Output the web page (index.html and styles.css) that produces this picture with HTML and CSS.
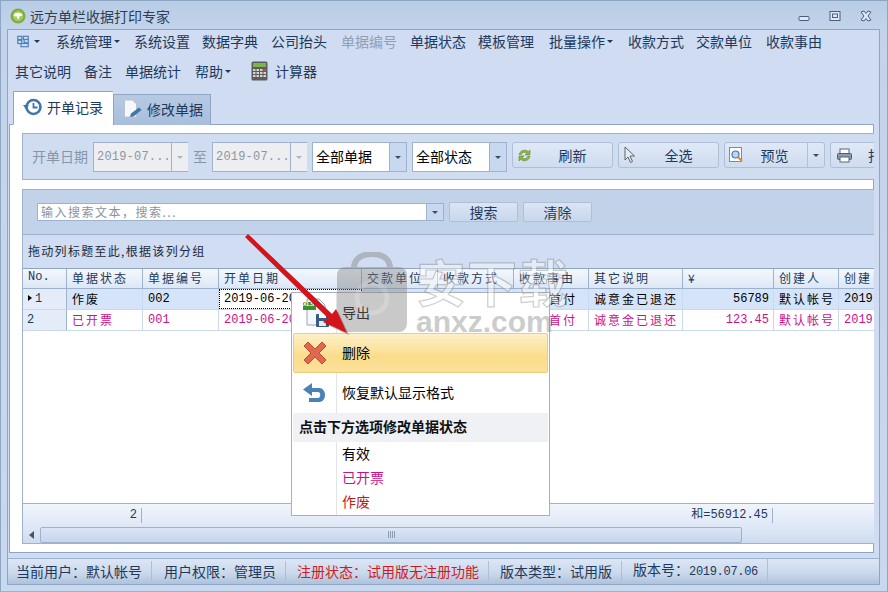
FILE: index.html
```html
<!DOCTYPE html>
<html lang="zh">
<head>
<meta charset="utf-8">
<title>远方单栏收据打印专家</title>
<link rel="stylesheet" href="styles.css">
</head>
<body>
<div class="app">
  <header class="titlebar">
    <svg class="appicon" width="16" height="16" viewBox="0 0 16 16"><circle cx="8" cy="8" r="7.5" fill="#7fae3c"/><circle cx="8" cy="8" r="5.2" fill="#a5cc63"/><path d="M3.5 7.5c1-2.5 4-3 6-2.5 1.500.3 2.800 1 3 2.200-.8.8-2 .8-3 .8l-.5 3H7.500L7 8.500c-1.200.3-2.500 0-3.500-1z" fill="#fff"/></svg>
    <span class="apptitle">远方单栏收据打印专家</span>
    <div class="winbtns">
      <svg width="12" height="12" viewBox="0 0 12 12"><rect x="1" y="6.500" width="10" height="4" rx="1" fill="#dfe8f4" stroke="#4a5f7c"/></svg>
      <svg width="12" height="12" viewBox="0 0 12 12"><rect x="1" y="1.500" width="10" height="9" fill="#dfe8f4" stroke="#4a5f7c"/><rect x="3.500" y="4" width="5" height="3.500" fill="none" stroke="#4a5f7c"/></svg>
      <svg width="12" height="12" viewBox="0 0 12 12"><path d="M1 2l3-1 2 2.500L8 1l3 1-3 4 3 4-3 1-2-2.500L4 11l-3-1 3-4z" fill="#dfe8f4" stroke="#4a5f7c"/></svg>
    </div>
  </header>

  <div class="frame">
    <nav class="menubar">
      <div class="menurow first">
        <span class="mitem iconitem">
          <svg width="15" height="15" viewBox="0 0 15 15"><g fill="#cfe0f4" stroke="#4f81bd" stroke-width="1.500"><rect x="1" y="1" width="5" height="4"/><rect x="8" y="1" width="6" height="4"/><rect x="9" y="5" width="5" height="4"/><rect x="1" y="6" width="5" height="4"/><rect x="5" y="10" width="9" height="4"/></g></svg>
          <i class="caret"></i>
        </span>
        <span class="mitem gap16">系统管理<i class="caret"></i></span>
        <span class="mitem gap14">系统设置</span>
        <span class="mitem gap12">数据字典</span>
        <span class="mitem gap13">公司抬头</span>
        <span class="mitem gap14 disabled">单据编号</span>
        <span class="mitem gap13">单据状态</span>
        <span class="mitem gap12">模板管理</span>
        <span class="mitem gap15">批量操作<i class="caret"></i></span>
        <span class="mitem gap15">收款方式</span>
        <span class="mitem gap12">交款单位</span>
        <span class="mitem gap14">收款事由</span>
      </div>
      <div class="menurow">
        <span class="mitem">其它说明</span>
        <span class="mitem gap13">备注</span>
        <span class="mitem gap13">单据统计</span>
        <span class="mitem gap14">帮助<i class="caret"></i></span>
        <span class="mitem gap18 calc">
          <svg width="17" height="20" viewBox="0 0 17 20"><rect x=".5" y=".5" width="16" height="19" rx="1.500" fill="#5c5c5c"/><rect x="2" y="2" width="13" height="4" fill="#7fb24a"/><g fill="#d9d4cc"><rect x="2" y="8" width="2.500" height="2"/><rect x="5.500" y="8" width="2.500" height="2"/><rect x="9" y="8" width="2.500" height="2"/><rect x="12.500" y="8" width="2.500" height="2" fill="#c25050"/><rect x="2" y="11" width="2.500" height="2"/><rect x="5.500" y="11" width="2.500" height="2"/><rect x="9" y="11" width="2.500" height="2"/><rect x="12.500" y="11" width="2.500" height="2"/><rect x="2" y="14" width="2.500" height="2"/><rect x="5.500" y="14" width="2.500" height="2"/><rect x="9" y="14" width="2.500" height="2"/><rect x="12.500" y="14" width="2.500" height="2"/></g></svg>
          计算器
        </span>
      </div>
    </nav>

    <div class="tabs">
      <div class="tab active">
        <svg width="20" height="20" viewBox="0 0 20 20"><circle cx="10.500" cy="10" r="7" fill="#fff" stroke="#3f77ad" stroke-width="2.600"/><path d="M10.500 6v4.500h4" fill="none" stroke="#3f77ad" stroke-width="1.800"/><path d="M0 8l6 0-3 4.500z" fill="#3f77ad"/></svg>
        开单记录
      </div>
      <div class="tab">
        <svg width="20" height="20" viewBox="0 0 20 20"><path d="M1.500 1h8l4 4v13h-12z" fill="#f7f8fa" stroke="#b9c3cf"/><path d="M7 18l1-3.500 8-6 2.500 2.500-8 6.500z" fill="#3f77ad"/></svg>
        修改单据
      </div>
    </div>

    <main class="page">
      <section class="toolbar">
        <span class="flabel">开单日期</span>
        <div class="combo date"><span>2019-07...</span><b class="arrowbtn"><i class="caret"></i></b></div>
        <span class="flabel to">至</span>
        <div class="combo date"><span>2019-07...</span><b class="arrowbtn"><i class="caret"></i></b></div>
        <div class="combo sel"><span>全部单据</span><b class="arrowbtn"><i class="caret dark"></i></b></div>
        <div class="combo sel"><span>全部状态</span><b class="arrowbtn"><i class="caret dark"></i></b></div>
        <button class="tbtn plain">
          <svg width="15" height="15" viewBox="0 0 15 15"><path d="M2 6.500C2.800 3.500 5.500 2 8 2.200c1.500.1 2.500.8 3.300 1.500L13 2v5H8l2-1.800C8.500 3.800 5 4 4.300 6.500z" fill="#8bb84a" stroke="#5e8a2a" stroke-width=".6"/><path d="M13 8.500c-.8 3-3.500 4.500-6 4.300-1.500-.1-2.500-.8-3.300-1.500L2 13V8h5l-2 1.800c1.500 1.400 5 1.200 5.700-1.300z" fill="#8bb84a" stroke="#5e8a2a" stroke-width=".6"/></svg>
          <span>刷新</span>
        </button>
        <button class="tbtn plain">
          <svg width="15" height="18" viewBox="0 0 15 18"><path d="M2 1v13l3-3 2.500 5.500 2-1L7 10h4.500z" fill="#e6ebf2" stroke="#5b6470"/></svg>
          <span>全选</span>
        </button>
        <button class="tbtn split">
          <svg width="15" height="17" viewBox="0 0 15 17"><rect x=".5" y=".5" width="12" height="14" fill="#fff" stroke="#7a8ba0"/><circle cx="6.500" cy="7.500" r="3.500" fill="#bcd6f0" stroke="#3f77ad" stroke-width="1.200"/><path d="M9 10l4 4" stroke="#d98a2b" stroke-width="2"/></svg>
          <span>预览</span>
          <b class="splitarrow"><i class="caret dark"></i></b>
        </button>
        <button class="tbtn print">
          <svg width="15" height="15" viewBox="0 0 15 15"><rect x="3" y="1" width="9" height="5" fill="#fff" stroke="#5b6470"/><rect x=".5" y="5.500" width="14" height="6" rx="1" fill="#8b9bb0" stroke="#4f5b6b"/><rect x="3" y="9" width="9" height="5" fill="#fff" stroke="#5b6470"/></svg>
          <span>打印</span>
        </button>
      </section>

      <section class="gridbox">
        <div class="searchbar">
          <div class="searchinput"><span>输入搜索文本，搜索...</span><b class="arrowbtn"><i class="caret dark"></i></b></div>
          <button class="sbtn">搜索</button>
          <button class="sbtn">清除</button>
        </div>
        <div class="groupbar">拖动列标题至此,根据该列分组</div>
        <div class="grid">
          <div class="row head">
            <span class="mono">No.</span><span>单据状态</span><span>单据编号</span><span>开单日期</span><span>交款单位</span><span>收款方式</span><span>收款事由</span><span>其它说明</span><span>¥</span><span>创建人</span><span>创建日期</span>
          </div>
          <div class="row rec selected">
            <span class="ind mono"><i class="rowmark"></i>1</span><span>作废</span><span class="mono">002</span><span class="mono focus">2019-06-20</span><span></span><span></span><span class="pay">首付</span><span>诚意金已退还</span><span class="mono num">56789</span><span>默认帐号</span><span class="mono">2019-06-20</span>
          </div>
          <div class="row rec pink">
            <span class="ind mono">2</span><span>已开票</span><span class="mono">001</span><span class="mono">2019-06-20</span><span></span><span></span><span class="pay">首付</span><span>诚意金已退还</span><span class="mono num">123.45</span><span>默认帐号</span><span class="mono">2019-06-20</span>
          </div>
          <div class="gridbody"></div>
          <div class="row summary">
            <span class="sum-a mono">2</span><span class="sum-b">和=56912.45</span>
          </div>
          <div class="hscroll">
            <i class="leftarrow"></i>
            <div class="thumb"><i class="grip"></i></div>
          </div>
        </div>
      </section>
    </main>

    <footer class="statusbar">
      <span>当前用户：默认帐号</span>
      <span>用户权限：管理员</span>
      <span class="red">注册状态：试用版无注册功能</span>
      <span>版本类型：试用版</span>
      <span>版本号：<em class="mono">2019.07.06</em></span>
    </footer>
  </div>
</div>

<div class="ctxmenu">
  <div class="citem">
    <svg class="cicon" width="30" height="30" viewBox="0 0 30 30"><path d="M5 1h12l6 6v20H5z" fill="#f4f7fb" stroke="#93a5bd"/><rect x="1" y="4" width="13" height="8" fill="#3f8f2f"/><rect x="14" y="16" width="13" height="13" rx="1" fill="#3c5a86"/><rect x="17" y="16" width="7" height="4" fill="#fff"/><rect x="17" y="23" width="7" height="5" fill="#e6ecf4"/></svg>
    <span class="xls">XLS</span>
    <span class="clabel">导出</span>
  </div>
  <div class="citem hot">
    <svg class="cicon" width="26" height="26" viewBox="0 0 26 26"><path d="M2 6l4-4 7 7 7-7 4 4-7 7 7 7-4 4-7-7-7 7-4-4 7-7z" fill="#dd6a50" stroke="#c5492f"/></svg>
    <span class="clabel">删除</span>
  </div>
  <div class="citem">
    <svg class="cicon" width="24" height="22" viewBox="0 0 24 22"><path d="M10 1L1 7.500 10 14v-4h6c3 0 3 6 0 6H7v4h10c8 0 8-14 0-14h-7z" fill="#4a82b8"/></svg>
    <span class="clabel">恢复默认显示格式</span>
  </div>
  <div class="cheader">点击下方选项修改单据状态</div>
  <div class="citem small"><span class="clabel">有效</span></div>
  <div class="citem small"><span class="clabel magenta">已开票</span></div>
  <div class="citem small"><span class="clabel crimson">作废</span></div>
</div>

<div class="watermark">
  <svg width="72" height="82" viewBox="0 0 72 82"><path d="M18 20V16C18 6 27 2 36 2s18 4 18 14v4" fill="none" stroke="#808080" stroke-width="6"/><rect x="1" y="15" width="70" height="65" rx="8" fill="#808080"/><circle cx="36" cy="46" r="15" fill="none" stroke="#999" stroke-width="5"/></svg>
  <div class="wmtext">
    <strong>安下载</strong>
    <span>anxz.com</span>
  </div>
</div>

<svg class="redarrow" width="120" height="110" viewBox="0 0 120 110">
  <path d="M0 2L3 -1 87 79 91 74 102 98 78 87 83 83z" fill="#000" opacity=".25" transform="translate(2 2)"/>
  <path d="M0 2L3 -1 87 79 91 74 102 98 78 87 83 83z" fill="#d3141a"/>
</svg>
</body>
</html>
```
FILE: styles.css
```css
* { box-sizing: border-box; }
html, body { margin: 0; padding: 0; }
body {
  width: 888px; height: 592px; overflow: hidden; position: relative;
  font-family: "Noto Sans CJK SC", "Liberation Sans", sans-serif;
  font-size: 14px; color: #1e395b;
  background: #d0ddf0;
}
i, b, em { font-style: normal; font-weight: normal; display: inline-block; }
.mono { font-family: "Liberation Mono", "Noto Sans CJK SC", monospace; }
button { font: inherit; color: inherit; padding: 0; }

.app {
  height: 592px; display: flex; flex-direction: column;
  padding: 0 7px 6px 6px; border: 1px solid #8ea6c4; border-bottom: 1px solid #9db2cd;
  background: linear-gradient(#b8cce6 0, #c3d4ea 29px, #c8d8ee 100%);
}
.titlebar { height: 28px; display: flex; align-items: center; flex: none; padding: 2px 0 0 3px; }
.appicon { margin-right: 4px; }
.apptitle { color: #2c3f56; line-height: 20px; }
.winbtns { margin-left: auto; display: flex; gap: 19px; padding-right: 8px; }

.frame {
  flex: 1; display: flex; flex-direction: column; min-height: 0;
  border: 1px solid #8fa6c2; background: #cfdcf1;
}
.menubar { flex: none; height: 61px; padding: 0 0 0 7px; }
.menurow { display: flex; align-items: center; height: 38px; white-space: nowrap; }
.menurow.first { padding-left: 2px; height: 22px; }
.mitem { display: inline-flex; align-items: center; line-height: 20px; }
.disabled { color: #8fa0b5; }
.iconitem { gap: 3px; width: 23px; }
.caret {
  width: 0; height: 0; border-left: 3px solid transparent; border-right: 3px solid transparent;
  border-top: 3px solid #1e395b; margin-left: 2px;
}
.caret.dark { border-top-color: #3d4d60; margin: 0; }
.gap12 { margin-left: 12px; }
.gap13 { margin-left: 13px; }
.gap14 { margin-left: 14px; }
.gap15 { margin-left: 15px; }
.gap16 { margin-left: 16px; }
.gap18 { margin-left: 20px; }
.calc { gap: 7px; }

.tabs { flex: none; height: 34px; display: flex; align-items: flex-end; padding-left: 5px; margin-bottom: -1px; position: relative; z-index: 1; }
.tab {
  width: 98px; height: 31px; display: flex; align-items: center; gap: 4px; padding: 0 0 2px 9px;
  background: linear-gradient(#b7cae4, #a7bedc); border: 1px solid #8ea6c4; border-bottom: 0;
}
.tab.active {
  width: 100px; height: 34px; background: #fff; border-bottom: 1px solid #fff; padding: 0 0 2px 9px;
  border-right: 0; color: #1e395b;
}

.page {
  flex: 1; min-height: 0; margin: 0 5px 5px 1px; padding: 8px 0 8px 12px;
  background: #fff; border: 1px solid #8ea6c4;
  display: flex; flex-direction: column; gap: 9px;
}
.toolbar {
  flex: none; height: 47px; display: flex; align-items: flex-start; overflow: hidden; margin-right: -1px;
  background: #d0ddf1; border: 1px solid #9db2cd; border-right: 0; padding: 8px 0 0 9px;
  white-space: nowrap;
}
.flabel { width: 57px; line-height: 28px; color: #8696aa; flex: none; }
.flabel.to { width: 12px; margin: 0 7px 0 5px; }
.combo { flex: none; height: 30px; width: 95px; display: flex; border: 1px solid #9db2cd; background: #fff; }
.combo > span { flex: 1; line-height: 27px; padding-left: 3px; }
.combo.date { background: #eceef2; color: #8f96a0; margin-left: 4px; }
.flabel.to + .combo.date { margin-left: 0; }
.combo.date > span { font: 12px/28px "Liberation Mono", monospace; letter-spacing: .2px; }
.combo.sel { margin-left: 5px; color: #000; }
.arrowbtn { width: 17px; flex: none; display: flex; align-items: center; justify-content: center; border-left: 1px solid #9db2cd; background: #c8d8ee; }
.arrowbtn .caret { margin: 0; }
.date .arrowbtn { background: #eceef2; }
.date .caret { border-top-color: #aeb4bc; }
.tbtn {
  flex: none; position: relative; width: 101px; height: 26px; margin-left: 5px; display: flex; align-items: center;
  border: 1px solid #aebfd6; border-radius: 3px; background: linear-gradient(#dfe8f6, #cfdcf0); padding-left: 4px;
}
.tbtn > span { position: absolute; left: 0; right: 0; text-align: center; line-height: 24px; }
.tbtn.plain > span { left: 20px; }
.tbtn.split > span { right: 17px; left: 17px; }
.tbtn.print { padding-left: 6px; }
.tbtn.print > span { text-align: left; left: 37px; }
.splitarrow { position: absolute; right: 0; top: 0; bottom: 0; width: 17px; border-left: 1px solid #aebfd6; display: flex; align-items: center; justify-content: center; }

.gridbox { flex: 1; min-height: 0; display: flex; flex-direction: column; border: 1px solid #9db2cd; border-right: 0; margin-right: -1px; }
.searchbar { flex: none; height: 45px; background: #c2d2e9; border-bottom: 1px solid #9db2cd; display: flex; align-items: center; gap: 5px; padding: 0 0 0 14px; }
.searchinput { width: 407px; height: 18px; display: flex; background: #fff; border: 1px solid #9db2cd; }
.searchinput > span { flex: 1; font-size: 12px; line-height: 16px; letter-spacing: 1.500px; color: #8b929c; padding-left: 3px; white-space: nowrap; }
.sbtn { width: 69px; height: 20px; line-height: 18px; border: 1px solid #aebfd6; border-radius: 2px; background: linear-gradient(#dae5f4, #c8d7ec); }
.groupbar { flex: none; height: 33px; padding: 7px 0 0 5px; background: #d0ddf2; font-size: 12px; line-height: 18px; letter-spacing: 1.300px; color: #1e2a3a; }
.grid { flex: 1; min-height: 0; display: flex; flex-direction: column; background: #fff; }
.row { display: grid; grid-template-columns: 44px 76px 76px 143px 76px 76px 75px 94px 91px 65px 36px; flex: none; white-space: nowrap; overflow: hidden; }
.row > span { overflow: hidden; padding-left: 5px; }
.head { height: 21px; border-top: 1px solid #8ea6c4; border-bottom: 1px solid #9db2cd; background: linear-gradient(#f4f8fd, #dce7f6); font-size: 12px; line-height: 17px; letter-spacing: 2px; color: #1e395b; }
.head > span { border-right: 1px solid #9db2cd; }
.head > .mono { letter-spacing: 0; }
.rec { height: 21px; font-size: 12px; line-height: 20px; letter-spacing: 2px; color: #000; border-bottom: 1px solid #c9d9ee; }
.rec > span { border-right: 1px solid #c9d9ee; }
.rec > .mono { letter-spacing: 0; }
.selected { background: #d5e4f9; }
.pink { color: #c8128a; background: #fff; }
.rec > .ind { background: #e3ecf8; border-right: 1px solid #9db2cd; border-bottom: 1px solid #9db2cd; color: #1e395b; padding-left: 4px; margin-bottom: -1px; }
.rec > .focus { background: #fff; outline: 1px dotted #000; outline-offset: -1px; }
.rowmark { width: 0; height: 0; border-top: 3px solid transparent; border-bottom: 3px solid transparent; border-left: 4px solid #000; margin-right: 3px; vertical-align: 1px; margin-left: 1px; }
.rec > .pay { padding-left: 35px; }
.rec > .num { text-align: right; padding: 0 4px 0 0; }
.gridbody { flex: 1; min-height: 0; }
.summary {
  height: 23px; border-top: 1px solid #9db2cd; background: linear-gradient(#f0f5fc, #dfe8f6);
  grid-template-columns: 119px 631px; padding-top: 4px; font-size: 12px; line-height: 14px; color: #1e395b; letter-spacing: 0;
}
.summary > span { padding: 0 4px 0 0; text-align: right; height: 15px; border-right: 1px solid #9db2cd; font-family: "Liberation Mono", "Noto Sans CJK SC", monospace; }
.hscroll { flex: none; height: 17px; position: relative; display: flex; align-items: center; background: linear-gradient(#dfe8f6, #cfdcf0); }
.leftarrow { width: 0; height: 0; margin-left: 6px; border-top: 4px solid transparent; border-bottom: 4px solid transparent; border-right: 5px solid #44546a; }
.thumb { margin-left: 6px; width: 702px; height: 16px; border: 1px solid #9db2cd; border-radius: 2px; background: linear-gradient(#dbe6f5, #c6d5ea); display: flex; align-items: center; justify-content: center; }
.grip { width: 7px; height: 7px; background: repeating-linear-gradient(90deg, #8b9bb0 0 1px, transparent 1px 2px); }

.statusbar {
  flex: none; height: 26px; display: flex; align-items: center; padding: 0 0 2px 8px;
  background: linear-gradient(#dce6f5, #cbd9ec 55%, #aec2dc);
  border-top: 1px solid #9db2cd; white-space: nowrap;
}
.statusbar > span { line-height: 20px; padding-right: 9px; margin-right: 11px; border-right: 1px solid #aebed3; }
.statusbar > span:first-child { margin-right: 12px; }
.statusbar em { font-size: 12px; letter-spacing: -.3px; }
.red { color: #d01a22; }

.ctxmenu {
  position: absolute; left: 291px; top: 292px; width: 259px; height: 224px;
  background: #fff; border: 1px solid #a9b0ba; padding: 0 1px; color: #000;
  background-image: linear-gradient(90deg, transparent 44px, #e3e4e8 44px, #e3e4e8 45px, transparent 45px);
}
.citem { height: 40px; display: flex; align-items: center; position: relative; }
.citem.hot { border: 1px solid #e8cf7e; border-radius: 2px; background: linear-gradient(#fdf0c8, #fbdc8a 60%, #fae19b); }
.citem.small { height: 24px; }
.cicon { position: absolute; left: 9px; top: 50%; transform: translateY(-50%); }
.hot .cicon { left: 8px; }
.xls { position: absolute; left: 9px; top: 7px; width: 13px; font: bold 6px/8px "Liberation Sans", sans-serif; color: #fff; text-align: center; }
.clabel { margin-left: 49px; line-height: 20px; margin-bottom: 2px; }
.small .clabel { margin-bottom: 3px; }
.hot .clabel { margin-left: 48px; }
.cheader { height: 29px; background: #f0f1f5; font-weight: 700; line-height: 26px; padding-left: 6px; color: #111; }
.magenta { color: #c8128a; }
.crimson { color: #c31a1a; }

.watermark { position: absolute; left: 336px; top: 252px; display: flex; gap: 8px; opacity: .42; pointer-events: none; }
.wmtext { display: flex; flex-direction: column; }
.wmtext strong { font-size: 50px; line-height: 56px; letter-spacing: 1px; color: #fff; -webkit-text-stroke: 1.200px #8a8a8a; white-space: nowrap; }
.wmtext span { font: bold 30px/28px "Liberation Sans", sans-serif; color: #888; }
.redarrow { position: absolute; left: 245px; top: 235px; pointer-events: none; overflow: visible; }
```
